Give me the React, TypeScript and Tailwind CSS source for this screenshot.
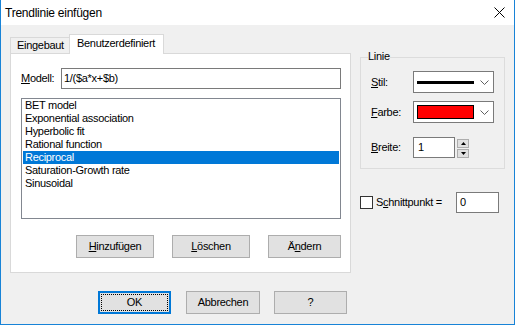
import React from 'react'

const items = [
  'BET model',
  'Exponential association',
  'Hyperbolic fit',
  'Rational function',
  'Reciprocal',
  'Saturation-Growth rate',
  'Sinusoidal',
]

function Btn({ w, children }: { w: string; children: React.ReactNode }) {
  return (
    <div className={`${w} h-[23px] bg-[#e1e1e1] border border-[#adadad] flex items-center justify-center`}>
      {children}
    </div>
  )
}

function Chevron() {
  return (
    <svg width="9" height="5" viewBox="0 0 9 5" className="ml-auto mr-[4px]">
      <polyline points="0.5,0.5 4.5,4.5 8.5,0.5" fill="none" stroke="#606060" strokeWidth="1" />
    </svg>
  )
}

function Field({ label, rest, children, mt }: { label: string; rest: string; children: React.ReactNode; mt: string }) {
  return (
    <div className={`flex items-center ${mt}`}>
      <span className="w-[42px]">
        <span className="underline">{label}</span>
        {rest}
      </span>
      {children}
    </div>
  )
}

export default function App() {
  return (
    <div className="w-[515px] h-[325px] bg-[#f0f0f0] border-x border-b border-[#1883d7] flex flex-col font-['Liberation_Sans',Arial,sans-serif] text-[11px] tracking-[-0.3px] text-black overflow-hidden">
      {/* title bar */}
      <div className="h-[25px] shrink-0 bg-white flex items-center pl-[4px] pr-[9px]">
        <span className="text-[12px] tracking-[-0.25px]">Trendlinie einfügen</span>
        <svg width="11" height="11" viewBox="0 0 11 11" className="ml-auto">
          <path d="M0.5 0.5 L10.5 10.5 M10.5 0.5 L0.5 10.5" stroke="#000" strokeWidth="1" />
        </svg>
      </div>

      <div className="flex flex-col px-[9px]">
        <div className="flex pt-[9px]">
          {/* left: tabs */}
          <div className="w-[342px] flex flex-col">
            <div className="flex items-end h-[20px] -mb-px relative z-10">
              <div className="w-[60px] h-[16px] mb-px border border-b-0 border-[#d9d9d9] bg-[#f0f0f0] flex items-center pl-[6px]">
                Eingebaut
              </div>
              <div className="-ml-px w-[95px] h-[20px] border border-b-0 border-[#d9d9d9] bg-white flex items-center pl-[7px] pb-[2px]">
                Benutzerdefiniert
              </div>
            </div>
            <div className="h-[220px] border border-[#d9d9d9] bg-white pl-[10px] pr-[9px] pt-[14px] flex flex-col">
              <div className="flex items-center h-[21px]">
                <span className="w-[40px]">
                  <span className="underline">M</span>odell:
                </span>
                <div className="flex-1 h-[21px] border border-[#7a7a7a] flex items-center pl-[2px]">1/($a*x+$b)</div>
              </div>
              <div className="mt-[9px] h-[121px] border border-[#828790] px-px">
                {items.map((it) => (
                  <div
                    key={it}
                    className={`h-[13px] leading-[13px] pl-[2px] ${it === 'Reciprocal' ? 'bg-[#0078d7] text-white' : ''}`}
                  >
                    {it}
                  </div>
                ))}
              </div>
              <div className="mt-[16px] flex justify-end gap-[18px]">
                <Btn w="w-[78px]">
                  <span><span className="underline">H</span>inzufügen</span>
                </Btn>
                <Btn w="w-[78px]">
                  <span><span className="underline">L</span>öschen</span>
                </Btn>
                <Btn w="w-[73px]">
                  <span>Ä<span className="underline">n</span>dern</span>
                </Btn>
              </div>
            </div>
          </div>

          {/* right column */}
          <div className="ml-[9px] w-[145px] flex flex-col">
            <div className="mt-[23px] h-[112px] border border-[#dcdcdc] flex flex-col pl-[10px] pr-[10px]">
              <span className="-mt-[9px] -ml-[3px] self-start leading-[14px] bg-[#f0f0f0]">Linie</span>
              <Field label="S" rest="til:" mt="mt-[8px]">
                <div className="w-[81px] h-[22px] border border-[#7a7a7a] bg-white flex items-center pl-[3px]">
                  <div className="w-[57px] h-[3px] bg-black" />
                  <Chevron />
                </div>
              </Field>
              <Field label="F" rest="arbe:" mt="mt-[8px]">
                <div className="w-[81px] h-[22px] border border-[#7a7a7a] bg-white flex items-center pl-[3px]">
                  <div className="w-[57px] h-[14px] bg-[#ff0000] border border-black" />
                  <Chevron />
                </div>
              </Field>
              <Field label="B" rest="reite:" mt="mt-[14px]">
                <div className="w-[42px] h-[21px] border border-[#7a7a7a] bg-white flex items-center pl-[4px]">1</div>
                <div className="ml-[2px] flex flex-col gap-px mt-px">
                  <div className="w-[12px] h-[9px] bg-[#e1e1e1] border border-[#adadad] flex items-center justify-center">
                    <svg width="5" height="3" viewBox="0 0 5 3"><polygon points="2.5,0 5,3 0,3" fill="#000" /></svg>
                  </div>
                  <div className="w-[12px] h-[9px] bg-[#e1e1e1] border border-[#adadad] flex items-center justify-center">
                    <svg width="5" height="3" viewBox="0 0 5 3"><polygon points="0,0 5,0 2.5,3" fill="#000" /></svg>
                  </div>
                </div>
              </Field>
            </div>
            <div className="mt-[23px] flex items-center h-[21px]">
              <div className="w-[13px] h-[13px] border border-[#333] bg-white" />
              <span className="ml-[3px] w-[80px]">
                S<span className="underline">c</span>hnittpunkt =
              </span>
              <div className="w-[43px] h-[21px] border border-[#7a7a7a] bg-white flex items-center pl-[3px]">0</div>
            </div>
          </div>
        </div>

        {/* bottom buttons */}
        <div className="mt-[18px] ml-[88px] flex">
          <div className="w-[73px] h-[23px] bg-[#e1e1e1] border-2 border-[#0078d7] flex">
            <div className="flex-1 m-px border border-dotted border-black flex items-center justify-center">OK</div>
          </div>
          <div className="ml-[15px]">
            <Btn w="w-[74px]">Abbrechen</Btn>
          </div>
          <div className="ml-[14px]">
            <Btn w="w-[73px]">?</Btn>
          </div>
        </div>
      </div>
    </div>
  )
}
